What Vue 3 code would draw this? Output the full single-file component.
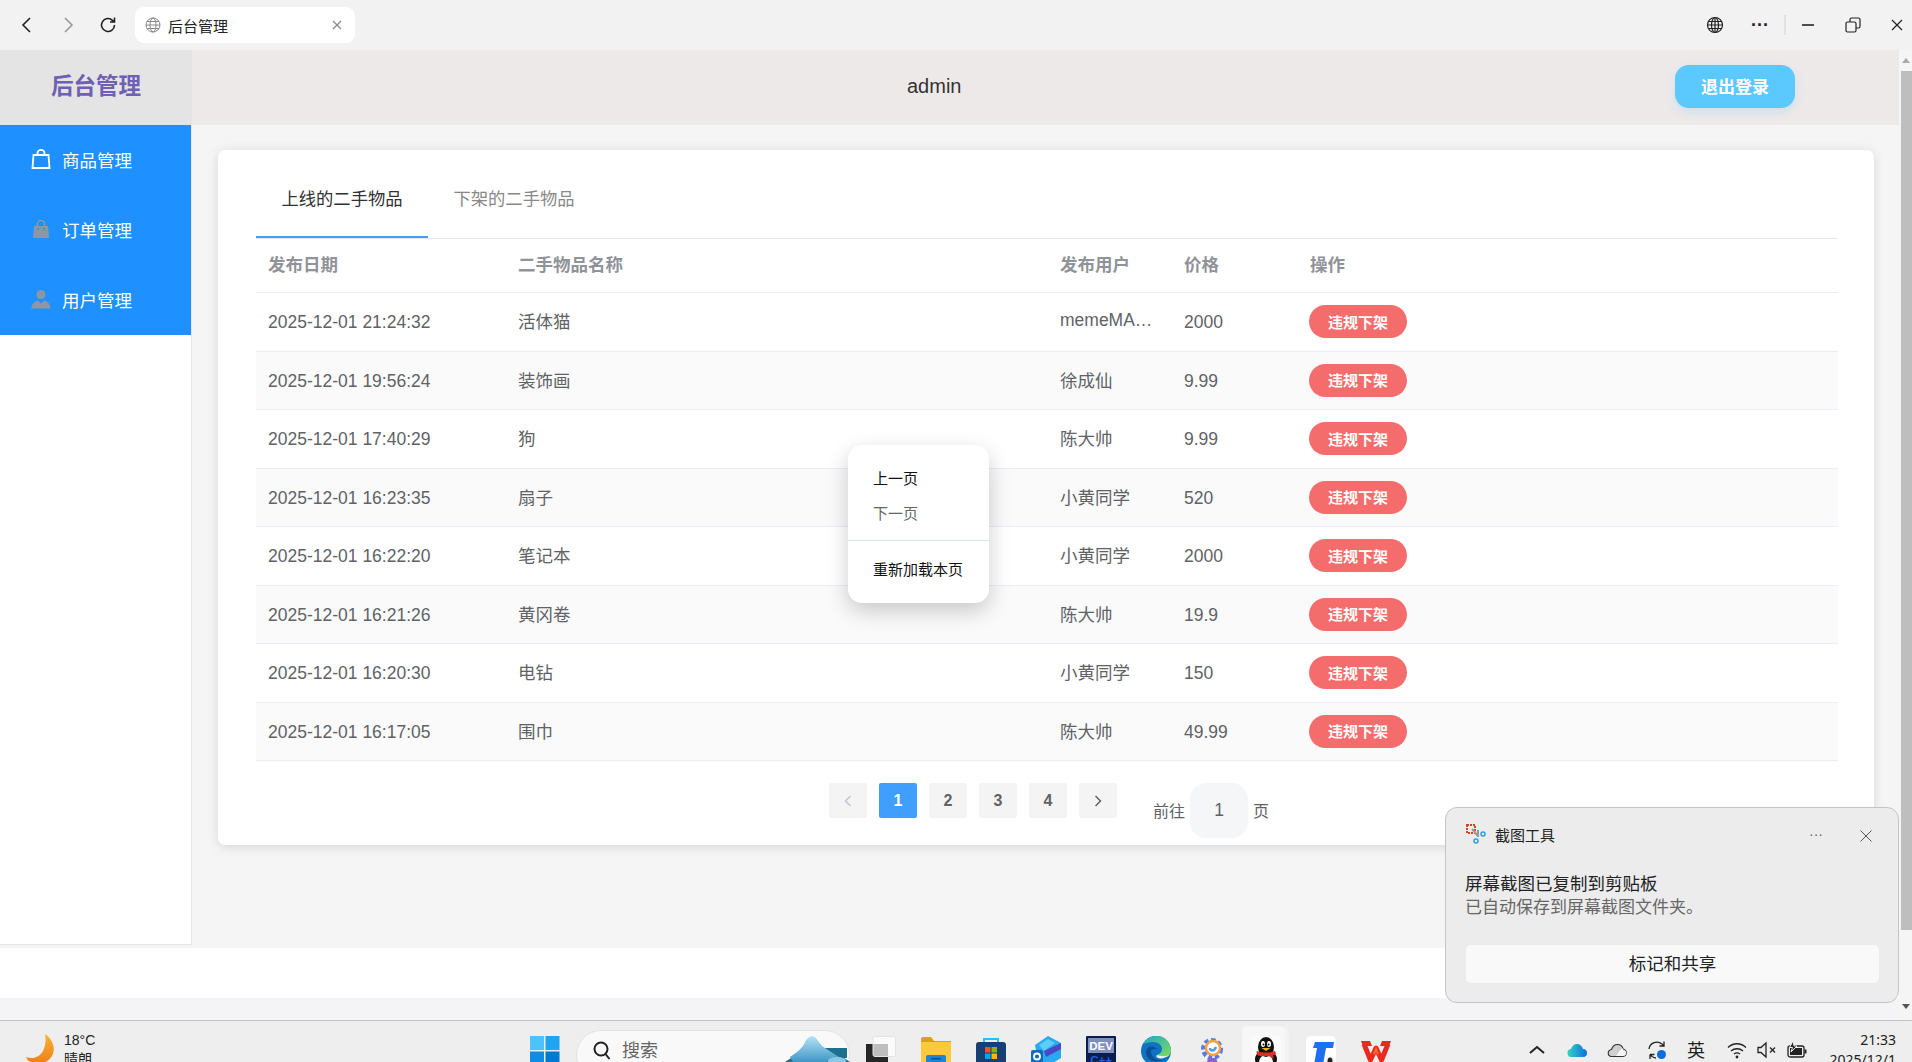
<script setup>
const rows = [
  { date: '2025-12-01 21:24:32', name: '活体猫', user: 'memeMA…', price: '2000' },
  { date: '2025-12-01 19:56:24', name: '装饰画', user: '徐成仙', price: '9.99' },
  { date: '2025-12-01 17:40:29', name: '狗', user: '陈大帅', price: '9.99' },
  { date: '2025-12-01 16:23:35', name: '扇子', user: '小黄同学', price: '520' },
  { date: '2025-12-01 16:22:20', name: '笔记本', user: '小黄同学', price: '2000' },
  { date: '2025-12-01 16:21:26', name: '黄冈卷', user: '陈大帅', price: '19.9' },
  { date: '2025-12-01 16:20:30', name: '电钻', user: '小黄同学', price: '150' },
  { date: '2025-12-01 16:17:05', name: '围巾', user: '陈大帅', price: '49.99' }
]
const pages = [1, 2, 3, 4]
</script>

<template>
  <div class="screen">
    <!-- 浏览器顶栏 -->
    <div class="browser-bar">
      <svg class="nav-icon back" viewBox="0 0 20 20"><path d="M13 3 6 10l7 7" /></svg>
      <svg class="nav-icon forward" viewBox="0 0 20 20"><path d="m7 3 7 7-7 7" /></svg>
      <svg class="nav-icon reload" viewBox="0 0 20 20"><path d="M16.500 10a6.500 6.500 0 1 1-2-4.700L16.500 7M16.500 2.500V7H12" /></svg>
      <div class="browser-tab">
        <svg class="tab-globe" viewBox="0 0 16 16"><circle cx="8" cy="8" r="7" /><ellipse cx="8" cy="8" rx="3" ry="7" /><path d="M1 8h14M2 4.500h12M2 11.500h12" /></svg>
        <span class="tab-title">后台管理</span>
        <svg class="tab-close" viewBox="0 0 10 10"><path d="m1 1 8 8M9 1 1 9" /></svg>
      </div>
      <div class="window-tools">
        <svg class="tool globe" viewBox="0 0 18 18"><circle cx="9" cy="9" r="7.500" /><ellipse cx="9" cy="9" rx="3.500" ry="7.500" /><path d="M1.500 9h15M9 1.500v15M2.500 5.500h13M2.500 12.500h13" /></svg>
        <span class="tool-dots">···</span>
        <span class="tool-sep"></span>
        <svg class="tool min" viewBox="0 0 14 14"><path d="M1 7h12" /></svg>
        <svg class="tool restore" viewBox="0 0 16 16"><rect x="1" y="5" width="10" height="10" rx="1.500" /><path d="M5 5V2.500A1.500 1.500 0 0 1 6.500 1h7A1.500 1.500 0 0 1 15 2.500v7a1.500 1.500 0 0 1-1.500 1.500H11" /></svg>
        <svg class="tool close" viewBox="0 0 12 12"><path d="m1 1 10 10M11 1 1 11" /></svg>
      </div>
    </div>

    <div class="viewport">
      <div class="page">
        <div class="page-header">
          <div class="logo">后台管理</div>
          <div class="header-right">
            <span class="admin-name">admin</span>
            <button class="logout">退出登录</button>
          </div>
        </div>

        <div class="page-body">
          <aside class="side">
            <div class="menu">
              <div class="menu-item">
                <svg class="menu-icon" viewBox="0 0 20 20"><path class="bag-line" d="M1.500 19 2.500 6h15l1 13zM6.500 6V4a3.500 3.100 0 0 1 7 0v2" /></svg>
                <span>商品管理</span>
              </div>
              <div class="menu-item">
                <svg class="menu-icon" viewBox="0 0 20 20"><path class="bag-fill" d="M2 19 3 7h14l1 12z" /><path class="bag-handle" d="M6.500 7V5a3.500 3.500 0 0 1 7 0v2" /><circle cx="7" cy="10" r="1" fill="#1e90ff" /><circle cx="13" cy="10" r="1" fill="#1e90ff" /></svg>
                <span>订单管理</span>
              </div>
              <div class="menu-item">
                <svg class="menu-icon" viewBox="0 0 20 20"><circle class="bag-fill" cx="10" cy="5.500" r="4.500" /><path class="bag-fill" d="M0.500 19.500c0-4.500 3-7 6.500-8l3 3 3-3c3.500 1 6.500 3.500 6.500 8z" /></svg>
                <span>用户管理</span>
              </div>
            </div>
          </aside>

          <main class="main">
            <section class="card">
              <div class="tabs">
                <div class="tab active">上线的二手物品</div>
                <div class="tab">下架的二手物品</div>
              </div>
              <table class="goods">
                <colgroup>
                  <col class="c-date" /><col class="c-name" /><col class="c-user" /><col class="c-price" /><col />
                </colgroup>
                <thead>
                  <tr>
                    <th>发布日期</th>
                    <th>二手物品名称</th>
                    <th>发布用户</th>
                    <th>价格</th>
                    <th>操作</th>
                  </tr>
                </thead>
                <tbody>
                  <tr v-for="(row, i) in rows" :key="row.date" :class="{ stripe: i % 2 === 1 }">
                    <td class="num">{{ row.date }}</td>
                    <td class="cn">{{ row.name }}</td>
                    <td class="cn">{{ row.user }}</td>
                    <td class="num">{{ row.price }}</td>
                    <td><button class="off-btn">违规下架</button></td>
                  </tr>
                </tbody>
              </table>
              <div class="pager">
                <button class="pg-btn disabled">
                  <svg viewBox="0 0 10 14"><path d="M7.500 2 2.500 7l5 5" /></svg>
                </button>
                <button v-for="p in pages" :key="p" class="pg-btn" :class="{ current: p === 1 }">{{ p }}</button>
                <button class="pg-btn">
                  <svg viewBox="0 0 10 14"><path d="m2.500 2 5 5-5 5" /></svg>
                </button>
                <div class="jump">
                  <span class="jump-word">前往</span>
                  <div class="jump-input">1</div>
                  <span class="jump-word">页</span>
                </div>
              </div>
            </section>
          </main>
        </div>

        <div class="white-strip"></div>
        <div class="grey-strip"></div>
      </div>

      <div class="scrollbar">
        <span class="arrow-up"></span>
        <div class="thumb"></div>
        <span class="arrow-down"></span>
      </div>
    </div>

    <!-- 任务栏 -->
    <div class="taskbar">
      <div class="weather">
        <svg class="moon" viewBox="0 0 28 30"><defs><linearGradient id="moonG" x1="0" y1="0" x2="0" y2="1"><stop offset="0" stop-color="#f9b233" /><stop offset="1" stop-color="#ef7f1a" /></linearGradient></defs><path fill="url(#moonG)" d="M19 0c8 6 11 14 7 22-4 7-14 10-23 5-1 0-2-2-3-4 8 3 14-1 17-6 3-6 3-12 2-17z" /></svg>
        <div class="weather-text">
          <div>18°C</div>
          <div>晴朗</div>
        </div>
      </div>

      <div class="dock">
        <svg class="win-logo" viewBox="0 0 30 30">
          <rect width="14" height="14" fill="#4cc2ff" /><rect x="15.500" width="14" height="14" fill="#1fa5f3" />
          <rect y="15.500" width="14" height="14" fill="#0f8ce4" /><rect x="15.500" y="15.500" width="14" height="14" fill="#0078d4" />
        </svg>
        <div class="search">
          <svg class="search-icon" viewBox="0 0 20 20"><circle cx="9" cy="9" r="6.500" /><path d="m13.500 14 4 5" /></svg>
          <span>搜索</span>
          <svg class="iceberg" viewBox="0 0 65 26">
            <defs><linearGradient id="iceG" x1="0" y1="0" x2="0" y2="1"><stop offset="0" stop-color="#b4e2f6" /><stop offset="1" stop-color="#3f97c6" /></linearGradient></defs>
            <path fill="#1f6f8f" d="M36 12h26v10H50C45 18 40 15 36 12z" />
            <path fill="#2a6d8a" d="M0 26C8 20 14 18 20 16l36 4 9 6z" />
            <path fill="url(#iceG)" d="M5 21c7-5 13-9 15-15 3-6 8-7 11-4 3 4 5 8 9 10 6 4 12 8 16 10l-16 4H8z" />
            <ellipse cx="52" cy="25" rx="9" ry="4" fill="#8cc8e6" />
          </svg>
        </div>
        <svg class="taskview" viewBox="0 0 30 30">
          <rect y="8" width="22" height="24" fill="#262626" />
          <rect x="7" y="0.500" width="22.500" height="20" rx="2" fill="#fff" fill-opacity="0.7" stroke="#e4e4e4" />
        </svg>

        <svg class="app" viewBox="0 0 30 30">
          <path fill="#d9a21b" d="M0 3a2 2 0 0 1 2-2h8l3 4h17v4H0z" /><rect y="6" width="30" height="24" fill="#fbc93b" />
          <rect x="5" y="19" width="20" height="11" rx="2" fill="#1b86d8" /><rect x="10" y="22" width="10" height="1.500" fill="#0b4f8c" />
        </svg>
        <svg class="app" viewBox="0 0 30 30">
          <path fill="none" stroke="#29c2ee" stroke-width="2" d="M8 8V3h14v5" /><rect y="6" width="30" height="24" rx="3" fill="#163f74" />
          <rect x="9" y="11" width="5.500" height="5.500" fill="#f25022" /><rect x="15.500" y="11" width="5.500" height="5.500" fill="#7fba00" />
          <rect x="9" y="17.500" width="5.500" height="5.500" fill="#00a4ef" /><rect x="15.500" y="17.500" width="5.500" height="5.500" fill="#ffb900" />
        </svg>
        <svg class="app" viewBox="0 0 30 30">
          <path fill="#2aa8f0" d="M4 9 17 0l13 7v15L17 30 7 24z" /><path fill="#5dcdf8" d="M8 9 17 3l7 4-11 8z" /><path fill="#4a47c8" d="m13 15 17-8v6l-15 8z" />
          <rect y="14" width="12" height="13" rx="2" fill="#0f6cbd" /><circle cx="6" cy="20.500" r="3" fill="none" stroke="#fff" stroke-width="1.800" />
        </svg>
        <svg class="app" viewBox="0 0 30 30">
          <rect width="30" height="30" rx="1" fill="#0b1c4e" /><rect x="2" y="2" width="26" height="15" fill="#7e8fc0" />
          <text x="15" y="14" text-anchor="middle" class="dev-text">DEV</text>
          <text x="15" y="28" text-anchor="middle" class="dev-text blue">C++</text>
        </svg>
        <svg class="app" viewBox="0 0 30 30">
          <defs><linearGradient id="edgeG" x1="0" y1="0" x2="1" y2="1"><stop offset="0" stop-color="#1fa8c8" /><stop offset="1" stop-color="#7fdc5a" /></linearGradient></defs>
          <circle cx="15" cy="15" r="15" fill="#0f73c4" />
          <path fill="url(#edgeG)" d="M2 8C6 2 11 0 16 0c8 0 14 6 14 15 0 4-3 6-7 6-3 0-6-1-7-2 3-1 5-3 5-6 0-4-4-7-9-7-4 0-7 1-10 2z" />
          <path fill="#0a4f94" d="M10 15c0 6 5 10 12 9-8 4-16 0-17-7 0-3 1-5 3-6 3-1 6 0 8 2-3 0-6 0-6 2z" />
          <path fill="#eef6f6" d="M16 19c3 1 8 2 12 0-3 3-8 4-11 3-2-1-2-2-1-3z" />
        </svg>
        <svg class="app gear" viewBox="0 0 30 30">
          <circle cx="16" cy="13" r="8.500" fill="none" stroke="#5a7ae0" stroke-width="5" stroke-dasharray="4 2.500" />
          <circle cx="17" cy="12" r="7" fill="#fff" stroke="#f1a340" stroke-width="2.500" />
          <path fill="none" stroke="#4a9fe8" stroke-width="2.500" d="M14 12c0 3 4 4 6-1" /><path fill="#8e5fd0" d="M12 22h8l3 8h-4l-3-4-2 4h-4z" />
        </svg>
        <div class="qq-slot">
          <svg class="app" viewBox="0 0 30 30">
            <rect width="30" height="30" rx="5" fill="#fafafa" />
            <ellipse cx="15" cy="23" rx="11" ry="9" fill="#111" />
            <ellipse cx="15" cy="26" rx="7" ry="7" fill="#fff" />
            <ellipse cx="15" cy="11" rx="8" ry="10" fill="#111" />
            <ellipse cx="12" cy="8" rx="2" ry="3" fill="#fff" /><ellipse cx="18" cy="8" rx="2" ry="3" fill="#fff" />
            <circle cx="12.400" cy="8.500" r="1" fill="#111" /><circle cx="17.600" cy="8.500" r="1" fill="#111" />
            <path fill="#f6b500" d="M10.500 12h9l-4.500 3z" /><path fill="#e02b20" d="M6 15c5 2 13 2 18 0l1 3c-1 1-2 1-3 1l1 4-5-3H8c-2-1-3-3-2-5z" />
          </svg>
        </div>
        <svg class="app" viewBox="0 0 30 30">
          <rect width="30" height="30" rx="5" fill="#fff" />
          <path fill="#1f6ff2" d="M9 6h19l-1 6h-7l-3 17H8l3-17H7z" />
          <circle cx="24" cy="26" r="5" fill="#f2f2f2" /><ellipse cx="24" cy="25" rx="2.500" ry="3.500" fill="#222" /><path fill="#e02b20" d="M21 26h6v1.500h-6z" />
        </svg>
        <svg class="app wps" viewBox="0 0 30 30">
          <path fill="none" stroke="#ea2a1f" stroke-width="5" stroke-linejoin="round" d="M3 7 9.500 23 15 11l5.500 12L27 7" />
          <path fill="none" stroke="#ff6a2a" stroke-width="2" d="M13 17l2-5 2 5" />
          <path fill="#ea2a1f" d="M0 4h9l2 5H2zM21 4h9l-2 5h-9z" />
        </svg>
      </div>

      <div class="tray">
        <svg class="tray-ico" viewBox="0 0 20 20"><path class="ln bold" d="m3 13 7-6 7 6" /></svg>
        <svg class="tray-ico" viewBox="0 0 20 20"><defs><linearGradient id="oneG" x1="0" y1="0" x2="1" y2="0"><stop offset="0" stop-color="#35d3c2" /><stop offset="1" stop-color="#0d6fe0" /></linearGradient></defs><path fill="url(#oneG)" d="M5 17a4 4 0 0 1-1-8c1-3 3-5 6-5s5 2 6 5a4 4 0 0 1 0 8z" /></svg>
        <svg class="tray-ico" viewBox="0 0 20 20"><path fill="#d0d0d0" stroke="#333" stroke-width="1.200" d="M5 16.500a3.500 3.500 0 0 1-.5-7C5.500 6.500 7.500 4.500 10.500 4.500s5 2 5.500 4.500a3.800 3.800 0 0 1 0 7.500z" /><path fill="#f7f7f7" d="m9 16 6-8c1 1 1 1 1 2a3 3 0 0 1 0 6z" /></svg>
        <svg class="tray-ico" viewBox="0 0 20 20"><path class="ln" d="M2 9a8 8 0 0 1 13-5l2 2M17 1.500V6h-4.500M3 14.500V19M3 14.500h4.500M3 14.500l2 2a8 8 0 0 0 4 1.500" /><circle cx="14.500" cy="14.500" r="4.500" fill="#0f6cdb" /></svg>
        <span class="ime">英</span>
        <div class="tray-tight">
          <svg class="tray-ico" viewBox="0 0 20 20"><path class="ln" d="M1 7.500c5-5 13-5 18 0M4 11c3.500-3 8.500-3 12 0M7 14c2-1.500 4-1.500 6 0" /><circle cx="10" cy="17" r="1.400" fill="#222" /></svg>
          <svg class="tray-ico" viewBox="0 0 20 20"><path class="ln" d="M1 7.500v5h3l5 4.500V3L4 7.500zM13 7.500l5 5M18 7.500l-5 5" /></svg>
          <svg class="tray-ico" viewBox="0 0 20 20"><rect class="ln" x="1" y="6" width="16" height="11" rx="2" /><rect x="3" y="8" width="12" height="7" fill="#222" /><rect x="17.500" y="9.500" width="2" height="4" fill="#222" /><path fill="#222" stroke="#eee" d="M6 1 2.500 7.500h3L4 12l6-6H7z" /></svg>
        </div>
      </div>
      <div class="clock">
        <div>21:33</div>
        <div>2025/12/1</div>
      </div>
    </div>

    <!-- 右键菜单 -->
    <div class="ctx-menu">
      <div class="ctx-item">上一页</div>
      <div class="ctx-item muted">下一页</div>
      <div class="ctx-line"></div>
      <div class="ctx-item">重新加载本页</div>
    </div>

    <!-- 系统通知 -->
    <div class="toast">
      <div class="toast-head">
        <svg class="toast-logo" viewBox="0 0 20 20">
          <rect x="1" y="1" width="8" height="8" fill="none" stroke="#d8431f" stroke-width="2" stroke-dasharray="2 1" />
          <path fill="none" stroke="#9a9a9a" stroke-width="2" d="m6 5 6 7M12 6v7" />
          <circle cx="17" cy="10" r="2" fill="none" stroke="#2d9fe0" stroke-width="1.500" /><circle cx="10" cy="17" r="2" fill="none" stroke="#2d9fe0" stroke-width="1.500" />
        </svg>
        <span class="toast-title">截图工具</span>
        <span class="toast-dots">···</span>
        <svg class="toast-close" viewBox="0 0 12 12"><path d="m0.500 0.500 11 11M11.500 0.500l-11 11" /></svg>
      </div>
      <div class="toast-main">屏幕截图已复制到剪贴板</div>
      <div class="toast-sub">已自动保存到屏幕截图文件夹。</div>
      <div class="toast-btn">标记和共享</div>
    </div>
  </div>
</template>

<style scoped>
.screen {
  position: relative;
  width: 1912px;
  height: 1062px;
  overflow: hidden;
  display: flex;
  flex-direction: column;
  background: #f5f5f5;
  font-family: "Liberation Sans", "Noto Sans CJK SC", sans-serif;
  color: #333;
}

/* 浏览器顶栏 */
.browser-bar {
  height: 50px;
  flex: none;
  display: flex;
  align-items: center;
  background: #f2f2f2;
}

.nav-icon {
  width: 20px;
  height: 20px;
  fill: none;
  stroke: #222;
  stroke-width: 1.600;
  flex: none;
}

.back {
  margin-left: 17px;
}

.forward {
  margin-left: 21px;
  stroke: #999;
}

.reload {
  margin-left: 20px;
}

.browser-tab {
  margin-left: 17px;
  width: 220px;
  height: 36px;
  background: #fff;
  border-radius: 9px;
  display: flex;
  align-items: center;
  padding: 0 13px 0 10px;
  box-sizing: border-box;
}

.tab-globe {
  width: 16px;
  height: 16px;
  fill: none;
  stroke: #888;
  stroke-width: 1;
}

.tab-title {
  margin-left: 7px;
  font-size: 15px;
  color: #222;
}

.tab-close {
  margin-left: auto;
  width: 10px;
  height: 10px;
  stroke: #888;
  stroke-width: 1.200;
}

.window-tools {
  margin-left: auto;
  display: flex;
  align-items: center;
}

.tool {
  fill: none;
  stroke: #222;
  stroke-width: 1.200;
}

.globe {
  width: 18px;
  height: 18px;
}

.tool-dots {
  margin-left: 27px;
  width: 18px;
  font-size: 18px;
  font-weight: bold;
  text-align: center;
  color: #222;
}

.tool-sep {
  margin-left: 15px;
  width: 2px;
  height: 20px;
  background: #e2e2e2;
}

.min {
  margin-left: 15px;
  width: 14px;
  height: 14px;
  stroke-width: 1.600;
}

.restore {
  margin-left: 30px;
  width: 16px;
  height: 16px;
}

.close {
  margin-left: 30px;
  margin-right: 9px;
  width: 12px;
  height: 12px;
}

/* 页面 */
.viewport {
  height: 970px;
  flex: none;
  display: flex;
}

.page {
  flex: 1;
  min-width: 0;
  display: flex;
  flex-direction: column;
}

.page-header {
  height: 75px;
  flex: none;
  display: flex;
}

.logo {
  width: 192px;
  flex: none;
  background: #e4e4e4;
  text-align: center;
  line-height: 73px;
  font-size: 22.500px;
  font-weight: bold;
  color: #6f5fb5;
}

.header-right {
  flex: 1;
  display: flex;
  align-items: center;
  background: #eee9e9;
  padding: 0 104px 2px 715px;
  box-sizing: border-box;
}

.admin-name {
  font-size: 20px;
  color: #333;
}

.logout {
  margin-left: auto;
  width: 120px;
  height: 43px;
  padding-bottom: 3px;
  border: none;
  border-radius: 14px;
  background: #5bc8fe;
  color: #fff;
  font: bold 17px "Liberation Sans", "Noto Sans CJK SC", sans-serif;
  box-shadow: 0 4px 10px rgba(91, 200, 254, 0.25);
}

.page-body {
  flex: 1;
  min-height: 0;
  display: flex;
}

.side {
  width: 192px;
  flex: none;
  height: 820px;
  box-sizing: border-box;
  background: #fff;
  border-right: 1px solid #e6e6e6;
  border-bottom: 1px solid #e6e6e6;
}

.menu {
  background: #1e90ff;
}

.menu-item {
  height: 70px;
  box-sizing: border-box;
  padding: 0 0 2px 31px;
  display: flex;
  align-items: center;
  color: #fff;
  font-size: 17.500px;
}

.menu-icon {
  width: 20px;
  height: 20px;
  margin-right: 11px;
}

.bag-line {
  fill: none;
  stroke: #fff;
  stroke-width: 1.800;
}

.bag-fill {
  fill: #8f96a3;
}

.bag-handle {
  fill: none;
  stroke: #8f96a3;
  stroke-width: 1.500;
}

.main {
  flex: 1;
  min-width: 0;
  padding: 25px 25px 0 26px;
}

.card {
  background: #fff;
  border-radius: 7px;
  box-shadow: 0 2px 12px rgba(0, 0, 0, 0.12);
  padding: 12px 36px 7px 38px;
}

.tabs {
  display: flex;
  height: 77px;
  box-sizing: border-box;
  border-bottom: 1px solid #e4e7ed;
}

.tab {
  width: 172px;
  box-sizing: border-box;
  height: 76px;
  line-height: 75px;
  font-size: 17.300px;
  text-align: center;
  color: #888;
}

.tab.active {
  color: #303133;
  border-bottom: 2px solid #409eff;
}

.goods {
  width: 100%;
  table-layout: fixed;
  border-collapse: separate;
  border-spacing: 0;
  font-size: 17.500px;
  color: #606266;
}

.c-date {
  width: 250px;
}

.c-name {
  width: 542px;
}

.c-user {
  width: 124px;
}

.c-price {
  width: 126px;
}

.goods th {
  height: 54px;
  box-sizing: border-box;
  padding: 0 12px 4px;
  text-align: left;
  color: #909399;
  font-weight: bold;
  border-bottom: 1px solid #ebeef5;
}

.goods td {
  height: 58.500px;
  box-sizing: border-box;
  padding: 0 12px;
  border-bottom: 1px solid #ebeef5;
  white-space: nowrap;
  overflow: hidden;
}

.goods td.num {
  padding-top: 2px;
}

.goods td.cn {
  padding-bottom: 2px;
}

.stripe td {
  background: #fafafa;
}

.off-btn {
  display: block;
  width: 98px;
  height: 33px;
  margin-left: -1px;
  padding-bottom: 2px;
  border: none;
  border-radius: 16.500px;
  background: #f56c6c;
  color: #fff;
  font: bold 15px "Liberation Sans", "Noto Sans CJK SC", sans-serif;
}

.pager {
  margin-top: 22px;
  padding-left: 573px;
  display: flex;
  align-items: flex-start;
  gap: 12px;
}

.pg-btn {
  width: 38px;
  height: 35px;
  padding: 0;
  border: none;
  border-radius: 2px;
  background: #f4f4f5;
  color: #606266;
  font: bold 16px "Liberation Sans", sans-serif;
  display: flex;
  align-items: center;
  justify-content: center;
}

.pg-btn svg {
  width: 10px;
  height: 14px;
  fill: none;
  stroke: #606266;
  stroke-width: 1.500;
}

.pg-btn.disabled svg {
  stroke: #c0c4cc;
}

.pg-btn.current {
  background: #409eff;
  color: #fff;
}

.jump {
  margin-left: 24px;
  display: flex;
  align-items: center;
  gap: 5px;
  font-size: 16px;
  color: #606266;
}

.jump-word {
  padding-bottom: 2px;
}

.jump-input {
  width: 58px;
  height: 55px;
  line-height: 55px;
  text-align: center;
  border-radius: 16px;
  background: #f5f6f8;
  font-size: 17.500px;
}

.white-strip {
  height: 50px;
  flex: none;
  background: #fff;
}

.grey-strip {
  height: 22px;
  flex: none;
  background: #f4f4f6;
}

/* 滚动条 */
.scrollbar {
  width: 13px;
  flex: none;
  background: #f5f5f5;
  display: flex;
  flex-direction: column;
  align-items: flex-end;
}

.arrow-up {
  margin: 8px 2px 0 0;
  border-left: 4px solid transparent;
  border-right: 4px solid transparent;
  border-bottom: 5px solid #a8a8a8;
}

.thumb {
  margin-top: 8px;
  width: 11px;
  height: 859px;
  background: #bebebe;
}

.arrow-down {
  margin: 74px 2px 0 0;
  border-left: 4px solid transparent;
  border-right: 4px solid transparent;
  border-top: 5px solid #555;
}

/* 任务栏 */
.taskbar {
  height: 42px;
  flex: none;
  box-sizing: border-box;
  border-top: 1px solid #c4c4c4;
  background: #eeeeee;
  display: flex;
  align-items: flex-start;
  overflow: hidden;
}

.weather {
  width: 530px;
  flex: none;
  box-sizing: border-box;
  padding: 13px 0 0 26px;
  display: flex;
}

.moon {
  width: 28px;
  height: 30px;
}

.weather-text {
  margin-left: 10px;
  margin-top: -3px;
  font-size: 14px;
  line-height: 19px;
  color: #222;
}

.dock {
  display: flex;
  align-items: flex-start;
  padding-top: 15px;
}

.win-logo {
  width: 30px;
  height: 30px;
  flex: none;
}

.search {
  margin-left: 16px;
  margin-top: -6px;
  width: 274px;
  height: 50px;
  box-sizing: border-box;
  flex: none;
  position: relative;
  border-radius: 25px;
  border: 1px solid #e2e2e2;
  background: #f9f9f9;
  padding: 8px 0 0 15px;
  display: flex;
  align-items: flex-start;
  font-size: 18px;
  line-height: 24px;
  color: #666;
}

.search-icon {
  width: 20px;
  height: 22px;
  fill: none;
  stroke: #222;
  stroke-width: 2;
  margin-right: 10px;
}

.iceberg {
  position: absolute;
  right: -1px;
  top: 5px;
  width: 65px;
  height: 26px;
}

.taskview {
  margin-left: 16px;
  width: 30px;
  height: 30px;
  flex: none;
}

.app {
  width: 30px;
  height: 30px;
  flex: none;
  margin-left: 25px;
}

.wps {
  margin-top: 1px;
}

.dev-text {
  font: bold 11.500px "Liberation Sans", sans-serif;
  fill: #fff;
}

.dev-text.blue {
  fill: #1f62d8;
}

.qq-slot {
  margin-left: 16px;
  margin-top: -10px;
  width: 43px;
  height: 40px;
  padding: 10px 0 0 9px;
  box-sizing: border-box;
  flex: none;
  border-radius: 5px 5px 0 0;
  background: #f7f7f7;
  box-shadow: 5px 0 0 -1px #f3f3f3;
}

.qq-slot .app {
  margin-left: 0;
  display: block;
}

.qq-slot + .app {
  margin-left: 21px;
}

.tray {
  margin-left: 136px;
  padding-top: 19px;
  display: flex;
  align-items: flex-start;
  gap: 20px;
}

.tray-ico {
  width: 20px;
  height: 20px;
  display: block;
  flex: none;
}

.ln {
  fill: none;
  stroke: #222;
  stroke-width: 1.300;
}

.ln.bold {
  stroke-width: 2;
}

.ime {
  width: 18px;
  font-size: 18px;
  line-height: 22px;
  color: #222;
}

.tray-tight {
  display: flex;
  gap: 10px;
  margin-left: 2px;
}

.clock {
  margin-left: auto;
  padding: 9px 16px 0 0;
  text-align: right;
  font-family: "Noto Sans", sans-serif;
  font-size: 14px;
  line-height: 20px;
  color: #222;
}

/* 右键菜单 */
.ctx-menu {
  position: absolute;
  left: 848px;
  top: 445px;
  width: 141px;
  height: 158px;
  box-sizing: border-box;
  padding: 16px 0 0 25px;
  background: #fff;
  border-radius: 14px;
  box-shadow: 0 8px 22px rgba(0, 0, 0, 0.2);
  font-size: 15px;
  color: #111;
}

.ctx-item {
  height: 35px;
  line-height: 35px;
}

.ctx-item.muted {
  color: #666;
}

.ctx-line {
  height: 1px;
  margin: 9px 0 11px -25px;
  background: #d8e5f5;
}

/* 系统通知 */
.toast {
  position: absolute;
  left: 1445px;
  top: 807px;
  width: 454px;
  height: 196px;
  box-sizing: border-box;
  padding: 0 19px 0 19px;
  background: #ececec;
  border: 1px solid #c4c4c4;
  border-radius: 12px;
  color: #222;
}

.toast-head {
  height: 52px;
  display: flex;
  align-items: center;
}

.toast-logo {
  width: 20px;
  height: 20px;
  margin-left: 1px;
}

.toast-title {
  margin-left: 9px;
  font-size: 15px;
}

.toast-dots {
  margin-left: auto;
  margin-right: 5px;
  font-size: 14px;
  color: #666;
}

.toast-close {
  margin-left: 32px;
  margin-right: 7px;
  margin-top: 3px;
  width: 12px;
  height: 12px;
  stroke: #555;
  stroke-width: 1;
}

.toast-main {
  margin-top: 12px;
  font-size: 17.500px;
  line-height: 24px;
}

.toast-sub {
  font-size: 17px;
  line-height: 23px;
  color: #666;
}

.toast-btn {
  margin-top: 26px;
  margin-left: 1px;
  height: 38px;
  line-height: 38px;
  text-align: center;
  background: #f9f9f9;
  border-radius: 5px;
  font-size: 17.500px;
}
</style>

<style>
html,
body {
  overflow: hidden;
}
</style>
